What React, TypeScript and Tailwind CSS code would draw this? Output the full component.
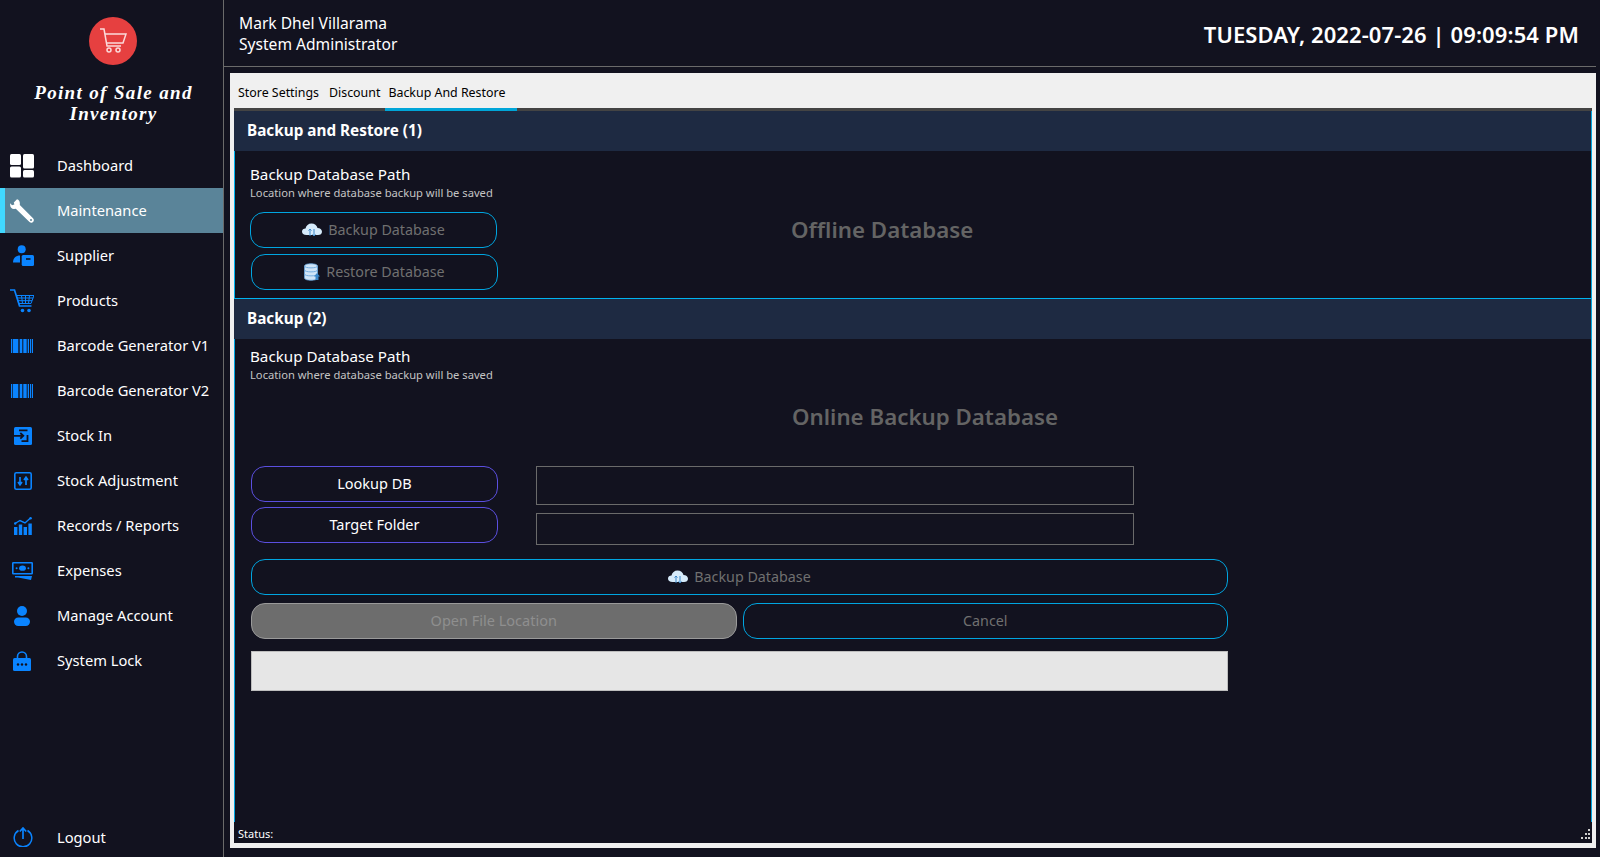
import type { ReactNode } from 'react';

const FONT = "font-['Noto_Sans','Open_Sans',sans-serif]";

function DashboardIcon() {
  return (
    <svg viewBox="0 0 24 24" className="w-6 h-6" fill="#fff">
      <rect x="0" y="0" width="11" height="11" rx="1.5" />
      <rect x="0" y="12.5" width="11" height="11" rx="1.5" />
      <rect x="13" y="0" width="11" height="14.5" rx="1.5" />
      <rect x="13" y="16" width="11" height="7.5" rx="1.5" />
    </svg>
  );
}

function WrenchIcon() {
  return (
    <svg viewBox="0 0 24 24" className="w-6 h-6" fill="#fff">
      <path d="M7 0.3 L3.8 3.4 L4.4 5.4 L2 6.2 L0.3 4.2 C-0.4 7.4 1.2 9.9 4 10 L5.8 9.7 L19.5 23 C21 24.3 23 23.6 23.6 22.2 C24.2 20.9 23.7 19.8 22.8 19 L9.8 6 C10.2 3 9.2 0.8 7 0.3 Z" />
      <circle cx="21" cy="21" r="1" fill="#5a8499" />
    </svg>
  );
}

function SupplierIcon() {
  return (
    <svg viewBox="0 0 21 21" className="w-[21px] h-[21px] ml-[2px]" fill="#0a84ff">
      <circle cx="8.7" cy="4.2" r="4" />
      <path d="M0 17.5 C0 13 3 10.5 7 10.5 V17.5 Z" />
      <rect x="8.7" y="10" width="12.3" height="11" rx="1.5" />
      <rect x="13" y="13.2" width="4.5" height="1.6" fill="#12121f" />
    </svg>
  );
}

function CartIcon() {
  return (
    <svg viewBox="0 0 24 24" className="w-6 h-6" fill="none" stroke="#0a84ff" strokeWidth="1">
      <path d="M0 1 H4.5 L9.5 17 H21.5" strokeWidth="1.7" />
      <path d="M6.5 6.5 H24 L21 14.5 H9 Z M11.5 6.5 L12.5 14.5 M15.5 6.5 V14.5 M19.5 6.5 L18.5 14.5 M7.5 9 H23 M8.2 11.7 H22" />
      <circle cx="12.5" cy="21.5" r="1.8" fill="#0a84ff" stroke="none" />
      <circle cx="19" cy="21.5" r="1.8" fill="#0a84ff" stroke="none" />
    </svg>
  );
}

function BarcodeIcon() {
  return (
    <svg viewBox="0 0 22 14" className="w-[22px] h-[14px]" fill="#0a84ff">
      <rect x="0" y="0" width="1.3" height="14" />
      <rect x="2" y="0" width="5.3" height="14" />
      <rect x="8.7" y="0" width="2.6" height="14" />
      <rect x="12.3" y="0" width="3.4" height="14" />
      <rect x="16.7" y="0" width="1.3" height="14" />
      <rect x="19" y="0" width="1" height="14" />
      <rect x="20.8" y="0" width="1.2" height="14" />
    </svg>
  );
}

function StockInIcon() {
  return (
    <svg viewBox="0 0 18 18" className="w-[18px] h-[18px] ml-[2px]">
      <rect width="18" height="18" rx="1.5" fill="#0a84ff" />
      <path d="M5 3.4 H13.5 M0 8.8 H9 M6.3 6 L9.3 8.8 L6.3 11.6 M13.5 8 V14.2 H7.5" fill="none" stroke="#12121f" strokeWidth="1.8" />
    </svg>
  );
}

function AdjustIcon() {
  return (
    <svg viewBox="0 0 18 18" className="w-[18px] h-[18px] ml-[2px]">
      <rect x="0.8" y="0.8" width="16.4" height="16.4" rx="1.5" fill="#12121f" stroke="#0a84ff" strokeWidth="1.6" />
      <path d="M6 5 V12 M4 10 L6 12.8 L8 10 M12 13 V6 M10 8 L12 5.2 L14 8" fill="none" stroke="#0a84ff" strokeWidth="1.7" />
    </svg>
  );
}

function ReportIcon() {
  return (
    <svg viewBox="0 0 18 18" className="w-[18px] h-[18px] ml-[2px]" fill="#0a84ff">
      <rect x="0" y="10" width="3.4" height="8" />
      <rect x="4.8" y="7.5" width="3.4" height="10.5" />
      <rect x="9.6" y="10" width="3.4" height="8" />
      <rect x="14.4" y="6.5" width="3.4" height="11.5" />
      <path d="M1 6.5 L6 3.5 L11 6 L16.5 1" fill="none" stroke="#0a84ff" strokeWidth="1.4" />
      <circle cx="16.6" cy="1.2" r="1.2" />
      <circle cx="1.2" cy="6.5" r="1.2" />
    </svg>
  );
}

function ExpensesIcon() {
  return (
    <svg viewBox="0 0 21 18" className="w-[21px] h-[18px]">
      <rect x="0.8" y="0.8" width="19.4" height="10.9" rx="0.5" fill="#12121f" stroke="#0a84ff" strokeWidth="1.6" />
      <ellipse cx="10.5" cy="6.2" rx="3.4" ry="2.6" fill="#0a84ff" />
      <circle cx="4.6" cy="6.2" r="1" fill="#0a84ff" />
      <circle cx="16.4" cy="6.2" r="1" fill="#0a84ff" />
      <path d="M3 14 H20 L19 18 L6 15.5 H3 Z" fill="#0a84ff" />
    </svg>
  );
}

function UserIcon() {
  return (
    <svg viewBox="0 0 16 20" className="w-4 h-5" fill="#0a84ff">
      <circle cx="8" cy="5" r="5" />
      <rect x="0" y="11.5" width="16" height="8.5" rx="4.2" />
    </svg>
  );
}

function LockIcon() {
  return (
    <svg viewBox="0 0 18 20" className="w-[18px] h-5">
      <path d="M4.5 8 V5.5 a4.5 4.5 0 0 1 9 0 V8" fill="none" stroke="#0a84ff" strokeWidth="1.6" />
      <rect y="7" width="18" height="13" rx="1.5" fill="#0a84ff" />
      <circle cx="5" cy="13.5" r="1.2" fill="#12121f" />
      <circle cx="9" cy="13.5" r="1.2" fill="#12121f" />
      <circle cx="13" cy="13.5" r="1.2" fill="#12121f" />
    </svg>
  );
}

function PowerIcon() {
  return (
    <svg viewBox="0 0 20 20" className="w-5 h-5" fill="none" stroke="#0a84ff" strokeWidth="1.5">
      <path d="M5.5 3.5 A8.8 8.8 0 1 0 14.5 3.5" />
      <path d="M10 12 V1.5 M6.8 4.5 L10 1 L13.2 4.5" strokeWidth="1.7" />
    </svg>
  );
}

function CloudIcon() {
  return (
    <svg viewBox="0 0 20 14" className="w-5 h-[14px]">
      <path d="M4.5 12 C1.5 12 0 10.5 0 8.5 C0 6.5 1.5 5.5 3.5 5.5 C4 2.5 6.5 0.5 9.5 0.5 C12.5 0.5 15 2.5 15.5 5 C18 5 20 6.5 20 8.7 C20 10.7 18.5 12 16 12 Z" fill="#d6ebfb" />
      <path d="M8 6 V13 M6.5 7.5 L8 6 L9.5 7.5 M12 6 V13 M10.5 11.5 L12 13 L13.5 11.5" fill="none" stroke="#3a86c8" strokeWidth="1" />
    </svg>
  );
}

function DatabaseIcon() {
  return (
    <svg viewBox="0 0 16 18" className="w-4 h-[18px]">
      <path d="M0.5 3 C0.5 0 13.5 0 13.5 3 V15 C13.5 18 0.5 18 0.5 15 Z" fill="#cfe4f7" stroke="#6aa6dc" strokeWidth="0.8" />
      <path d="M0.5 3 C0.5 5.5 13.5 5.5 13.5 3 M0.5 7 C0.5 9.5 13.5 9.5 13.5 7 M0.5 11 C0.5 13.5 13.5 13.5 13.5 11" fill="none" stroke="#6aa6dc" strokeWidth="0.9" />
      <path d="M13 10 L16 13.5 H14.5 V17 H11.5 V13.5 H10 Z" fill="#3a86c8" />
    </svg>
  );
}

const NAV: { label: string; icon: ReactNode; active?: boolean }[] = [
  { label: 'Dashboard', icon: <DashboardIcon /> },
  { label: 'Maintenance', icon: <WrenchIcon />, active: true },
  { label: 'Supplier', icon: <SupplierIcon /> },
  { label: 'Products', icon: <CartIcon /> },
  { label: 'Barcode Generator V1', icon: <BarcodeIcon /> },
  { label: 'Barcode Generator V2', icon: <BarcodeIcon /> },
  { label: 'Stock In', icon: <StockInIcon /> },
  { label: 'Stock Adjustment', icon: <AdjustIcon /> },
  { label: 'Records / Reports', icon: <ReportIcon /> },
  { label: 'Expenses', icon: <ExpensesIcon /> },
  { label: 'Manage Account', icon: <UserIcon /> },
  { label: 'System Lock', icon: <LockIcon /> },
];

function NavItem({ label, icon, active }: { label: string; icon: ReactNode; active?: boolean }) {
  return (
    <div
      className={`flex items-center h-[45px] border-l-[5px] text-[14.7px] text-white ${
        active ? 'bg-[#5a8499] border-[#40d8ff]' : 'border-transparent'
      }`}
    >
      <div className="flex justify-center items-center w-[24px] ml-[5px] mr-[23px]">{icon}</div>
      <span>{label}</span>
    </div>
  );
}

function SectionHeader({ title }: { title: string }) {
  return (
    <div className="flex items-center h-10 pl-[13px] pb-[2px] bg-[#1e2a42] text-[15.3px] font-bold text-white">
      {title}
    </div>
  );
}

function PathHeading() {
  return (
    <div className="text-white">
      <div className="text-[15.2px] leading-5">Backup Database Path</div>
      <div className="text-[11.2px] leading-[17px] text-[#c4c4c4]">Location where database backup will be saved</div>
    </div>
  );
}

function DimButton({ icon, label, className }: { icon?: ReactNode; label: string; className: string }) {
  return (
    <div
      className={`flex items-center justify-center gap-[6px] h-9 rounded-[14px] border border-[#00a5e0] text-[14.3px] text-[#707070] ${className}`}
    >
      {icon}
      <span>{label}</span>
    </div>
  );
}

function PurpleButton({ label }: { label: string }) {
  return (
    <div className="flex items-center justify-center w-[247px] h-9 rounded-[14px] border border-[#5b4fe0] text-[14.5px] text-white">
      {label}
    </div>
  );
}

export default function App() {
  return (
    <div className={`flex h-[857px] w-[1600px] overflow-hidden bg-[#12121f] ${FONT}`}>
      {/* Sidebar */}
      <aside className="flex flex-col w-[224px] shrink-0 border-r border-[#6a6a6a]">
        <div className="flex flex-col items-center h-[143px] pt-[17px]">
          <div className="flex items-center justify-center w-12 h-12 ml-[2px] rounded-full bg-[#e64040]">
            <svg viewBox="0 0 28 28" className="w-7 h-7" fill="none" stroke="#fbdada" strokeWidth="1.5">
              <path d="M1 2 H5 L8 19 H22" />
              <path d="M6 7 H27 L24 16 H7.5" />
              <circle cx="10" cy="23" r="2" />
              <circle cx="19" cy="23" r="2" />
            </svg>
          </div>
          <div className="mt-[17px] ml-1 w-[204px] text-center font-['Liberation_Serif',serif] italic font-bold text-[19px] leading-[21px] tracking-[1.35px] text-white">
            Point of Sale and Inventory
          </div>
        </div>
        <nav>
          {NAV.map((item) => (
            <NavItem key={item.label} {...item} />
          ))}
        </nav>
        <div className="flex items-center mt-auto h-10 pl-[13px] text-[14.7px] text-white">
          <div className="w-[20px] mr-[24px]">
            <PowerIcon />
          </div>
          <span>Logout</span>
        </div>
      </aside>

      {/* Main column */}
      <div className="flex flex-col flex-1 min-w-0 pr-1">
        <header className="flex items-center justify-between h-[67px] shrink-0 pl-[15px] pr-[17px] pt-[2px] border-b border-[#6a6a6a] text-white">
          <div className="text-[15.6px] leading-[21px]">
            <div>Mark Dhel Villarama</div>
            <div>System Administrator</div>
          </div>
          <div className="text-[22px] font-semibold tracking-[0.1px]">TUESDAY, 2022-07-26 | 09:09:54 PM</div>
        </header>

        <main className="flex flex-col flex-1 min-h-0 ml-[6px] mt-[6px] mb-[9px] px-1 pb-[5px] bg-[#f0f0f0]">
          {/* Tabs */}
          <div className="flex h-[35px] shrink-0 items-center pt-[6px] text-[12.4px] text-black">
            <span className="ml-1">Store Settings</span>
            <span className="ml-[10px]">Discount</span>
            <span className="ml-2">Backup And Restore</span>
          </div>
          <div className="flex h-[3px] shrink-0 bg-[#444444]">
            <div className="ml-[151px] w-[132px] bg-[#00a5d8]" />
          </div>

          {/* Tab body */}
          <div className="flex flex-col flex-1 min-h-0 bg-[#12121f] text-white">
            <div className="flex flex-col flex-1 min-h-0 border-r border-[#00a5e0]">
              <SectionHeader title="Backup and Restore (1)" />
              <div className="flex h-[148px] shrink-0 border-l border-b border-[#00b4f0] pl-[15px]">
                <div className="pt-[13px]">
                  <PathHeading />
                  <DimButton
                    className="w-[247px] mt-[11px]"
                    icon={<CloudIcon />}
                    label="Backup Database"
                  />
                  <DimButton
                    className="w-[247px] ml-px mt-[6px]"
                    icon={<DatabaseIcon />}
                    label="Restore Database"
                  />
                </div>
                <div className="ml-[293px] pt-[62px] text-[22.3px] leading-[34px] font-semibold text-[#646464]">
                  Offline Database
                </div>
              </div>

              <SectionHeader title="Backup (2)" />
              <div className="flex-1 min-h-0 border-l border-[#00a5e0] pl-[15px] pt-[7px]">
                <PathHeading />
                <div className="mt-[17px] ml-[542px] text-[22.3px] leading-[34px] font-semibold text-[#646464]">
                  Online Backup Database
                </div>
                <div className="flex gap-[38px] ml-px mt-8">
                  <div className="flex flex-col gap-[5px]">
                    <PurpleButton label="Lookup DB" />
                    <PurpleButton label="Target Folder" />
                  </div>
                  <div className="flex flex-col gap-2">
                    <div className="w-[598px] h-[39px] border border-[#6a6a6a]" />
                    <div className="w-[598px] h-[32px] border border-[#6a6a6a]" />
                  </div>
                </div>
                <div className="flex flex-col w-[977px] ml-px mt-[14px]">
                  <DimButton className="" icon={<CloudIcon />} label="Backup Database" />
                  <div className="flex gap-[6px] mt-[8px]">
                    <div className="flex flex-1 items-center justify-center h-9 rounded-[14px] border border-[#9a9a9a] bg-[#6d6d6d] text-[14.5px] text-[#8f8f8f]">
                      Open File Location
                    </div>
                    <DimButton className="flex-1" label="Cancel" />
                  </div>
                  <div className="h-10 mt-3 border border-[#bdbdbd] bg-[#e6e6e6]" />
                </div>
              </div>
            </div>

            {/* Status bar */}
            <div className="flex items-center justify-between h-[21px] shrink-0 pl-[4px] pr-[1px] pt-[3px] text-[11px]">
              <span>Status:</span>
              <svg viewBox="0 0 12 12" className="w-3 h-3" fill="#d0d0d0">
                <rect x="9" y="1" width="2" height="2" />
                <rect x="6" y="5" width="2" height="2" />
                <rect x="9" y="5" width="2" height="2" />
                <rect x="2" y="9" width="2" height="2" />
                <rect x="6" y="9" width="2" height="2" />
                <rect x="9" y="9" width="2" height="2" />
              </svg>
            </div>
          </div>
        </main>
      </div>
    </div>
  );
}
